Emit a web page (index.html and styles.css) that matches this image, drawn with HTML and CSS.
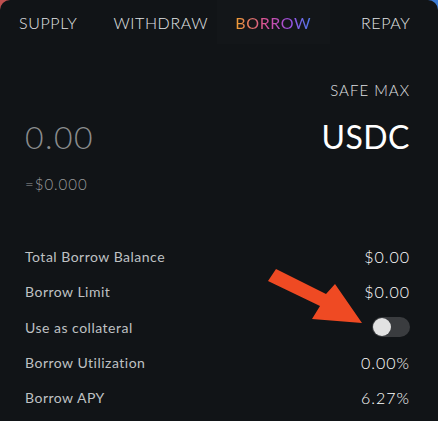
FILE: index.html
```html
<!DOCTYPE html>
<html lang="en">
<head>
  <meta charset="UTF-8" />
  <title>Borrow USDC</title>
  <meta name="viewport" content="width=device-width, initial-scale=1.0"/>
  <link rel="stylesheet" href="styles.css">
</head>
<body>

<div class="card">
  <nav class="tabs">
    <span class="tab">SUPPLY</span>
    <span class="tab">WITHDRAW</span>
    <span class="tab active"><span class="tab-text">BORROW</span></span>
    <span class="tab">REPAY</span>
  </nav>

  <div class="amount">
    <div class="safe-max">SAFE MAX</div>
    <div class="amount-row">
      <span class="amount-value">0.00</span>
      <span class="token">USDC</span>
    </div>
    <div class="amount-usd">=$0.000</div>
  </div>

  <div class="stats">
    <div class="stat"><span class="label">Total Borrow Balance</span><span class="value">$0.00</span></div>
    <div class="stat"><span class="label">Borrow Limit</span><span class="value">$0.00</span></div>
    <div class="stat"><span class="label">Use as collateral</span><span class="toggle"><span class="knob"></span></span></div>
    <div class="stat"><span class="label">Borrow Utilization</span><span class="value">0.00%</span></div>
    <div class="stat"><span class="label">Borrow APY</span><span class="value">6.27%</span></div>
  </div>

  <svg class="arrow" width="438" height="421" viewBox="0 0 438 421">
    <polygon points="268,281 276,269 326,294 335,284 362,323 312,319 320,306" fill="#ef4a23"/>
  </svg>
</div>

</body>
</html>
```

FILE: styles.css
```css
body {
  margin: 0;
  background: linear-gradient(90deg, #c0504f, #3a7bd5);
  font-family: Lato, "Open Sans", sans-serif;
  font-weight: 300;
  color: #e6e6e6;
}
.card {
  position: relative;
  width: 438px;
  height: 421px;
  background-color: #111417;
  border-radius: 10px 10px 0 0;
  overflow: hidden;
}
.tabs {
  display: grid;
  grid-template-columns: repeat(4, 112.5px);
  margin-left: -8px;
  height: 44px;
  font-size: 16px;
  letter-spacing: 0.6px;
  color: #e2e4e6;
}
.tab {
  display: flex;
  align-items: center;
  justify-content: center;
}
.tab.active {
  background-color: #131619;
}
.tab-text {
  font-weight: 400;
  background: linear-gradient(90deg, #f0a030, #d8509a 40%, #9c4fe0 72%, #4d7ae8);
  -webkit-background-clip: text;
  background-clip: text;
  color: transparent;
}
.amount {
  padding: 37px 28px 0 25px;
}
.safe-max {
  text-align: right;
  font-size: 15px;
  letter-spacing: 1px;
  color: #e0e2e4;
}
.amount-row {
  display: flex;
  justify-content: space-between;
  align-items: center;
  margin-top: 17px;
  height: 40px;
}
.amount-value {
  font-size: 32px;
  letter-spacing: 1.5px;
  color: #8a8c8e;
}
.token {
  font-size: 32px;
  font-weight: 400;
  letter-spacing: 0.5px;
  color: #ffffff;
}
.amount-usd {
  margin-top: 19px;
  font-size: 15px;
  letter-spacing: 1px;
  color: #9a9c9e;
}
.stats {
  margin-top: 46px;
  padding: 0 28px 0 25px;
}
.stat {
  display: flex;
  justify-content: space-between;
  align-items: center;
  height: 35.3px;
}
.label {
  font-size: 14px;
  font-weight: 400;
  color: #bfc1c3;
  letter-spacing: 0.5px;
}
.value {
  font-size: 16px;
  letter-spacing: 1px;
  color: #ffffff;
}
.toggle {
  position: relative;
  width: 38px;
  height: 20px;
  border-radius: 10px;
  background-color: #3a3c3f;
}
.knob {
  position: absolute;
  left: 1px;
  top: 1px;
  width: 18px;
  height: 18px;
  border-radius: 50%;
  background-color: #e2e2e2;
}
.arrow {
  position: absolute;
  left: 0;
  top: 0;
  pointer-events: none;
}
```
